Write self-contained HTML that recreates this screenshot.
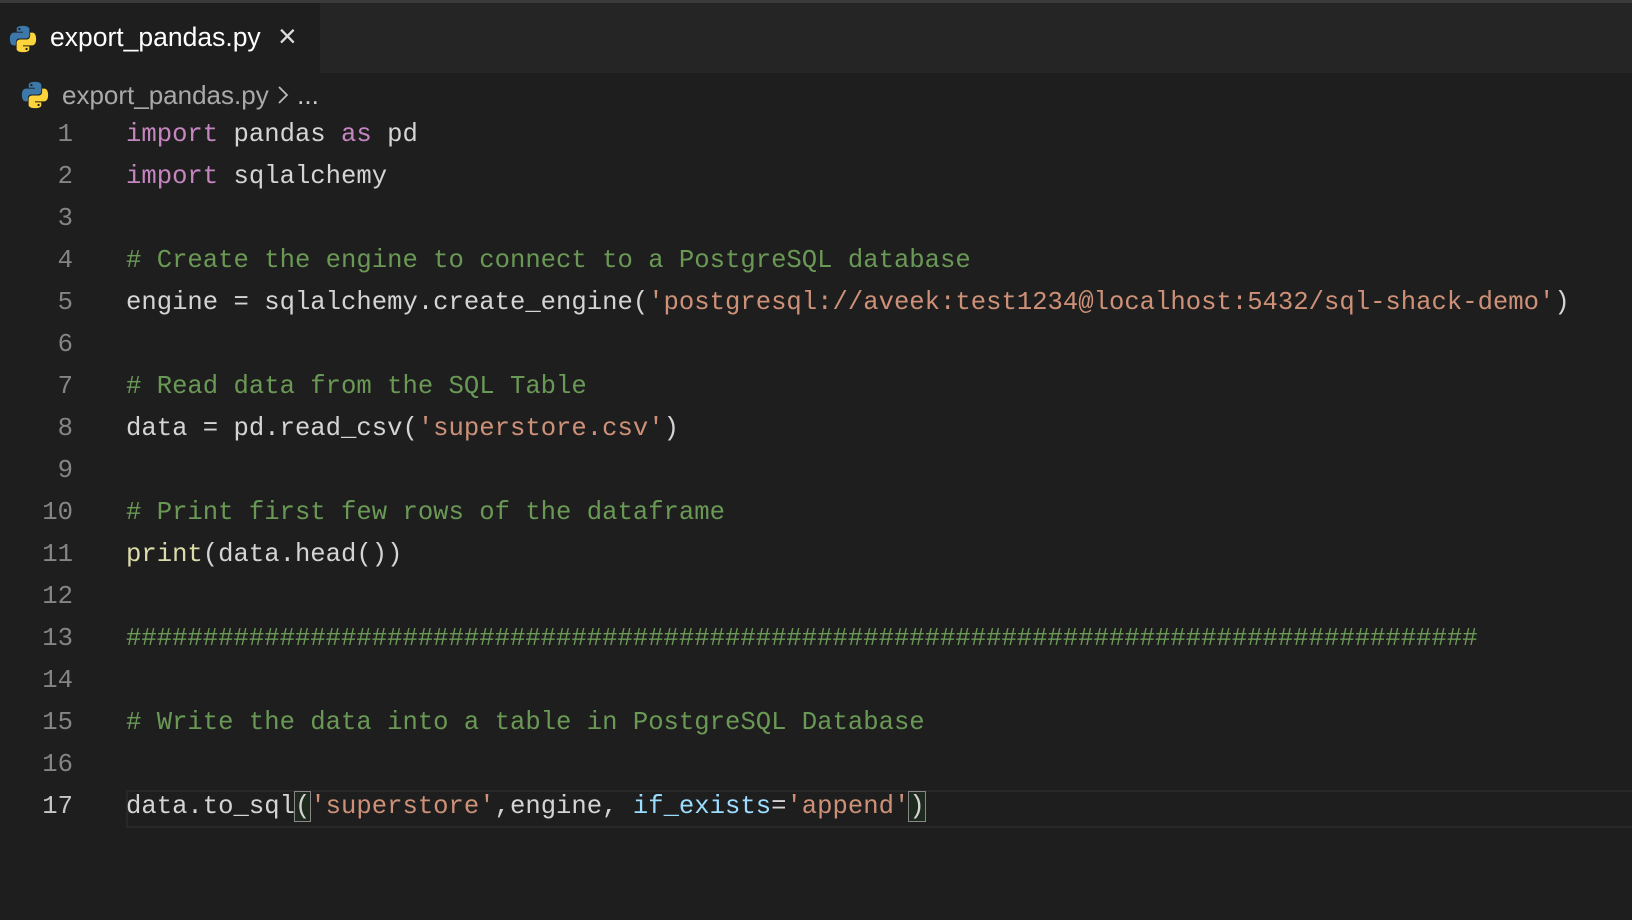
<!DOCTYPE html>
<html><head><style>
body{margin:0;width:1632px;height:920px;background:#1e1e1e;overflow:hidden;position:relative;font-family:"Liberation Sans",sans-serif}
.top{position:absolute;left:0;top:0;width:1632px;height:3px;background:#3a3a3a}
.tabbar{position:absolute;left:0;top:3px;width:1632px;height:70px;background:#252526}
.tab{position:absolute;left:0;top:0;width:320px;height:70px;background:#1e1e1e}
.tab .t{position:absolute;left:50px;top:19px;font-size:26.5px;color:#fff}
.tab .x{position:absolute;left:278px;top:15px;font-size:32px;color:#ddd}
.bc{position:absolute;left:62px;top:80px;font-size:26px;color:#a9a9a9}
.ic{position:absolute}
.code{position:absolute;left:0;top:114px;font-family:"Liberation Mono",monospace;font-size:25.6px;color:#d4d4d4}
.l{height:42px;line-height:42px;position:relative;white-space:pre}
.n{position:absolute;left:0;width:73px;text-align:right;color:#858585}
.c{position:absolute;left:126px}
.k{color:#c586c0}.s{color:#ce9178}.cm{color:#6a9955}.f{color:#dcdcaa}.p{color:#9cdcfe}
.hl{position:absolute;left:126px;top:790px;width:1506px;height:38px;border:2px solid #282828;border-right:none;box-sizing:border-box}
.br{outline:1px solid #888;background:#1e2a1e}
</style></head><body>
<div class="top"></div>
<div class="tabbar"><div class="tab">
<svg class="ic" style="left:8px;top:21px" width="30" height="30" viewBox="0 0 32 32"><path d="M15.9 2c-7 0-6.6 3-6.6 3v3.2h6.7v1H6.6S2 8.7 2 15.9s4 6.9 4 6.9h2.4v-3.3s-.1-4 3.9-4h6.7s3.8.1 3.8-3.6V5.8S23.4 2 15.9 2zm-3.7 2.1a1.2 1.2 0 110 2.4 1.2 1.2 0 010-2.4z" fill="#3c78aa"/><path d="M16.1 30c7 0 6.6-3 6.6-3v-3.2H16v-1h9.4s4.6.5 4.6-6.7-4-6.9-4-6.9h-2.4v3.3s.1 4-3.9 4h-6.7s-3.8-.1-3.8 3.6v6.1S8.6 30 16.1 30zm3.7-2.1a1.2 1.2 0 110-2.4 1.2 1.2 0 010 2.4z" fill="#fdd43b"/></svg>
<div class="t">export_pandas.py</div><div class="x">×</div></div></div>
<svg class="ic" style="left:20px;top:80px" width="30" height="30" viewBox="0 0 32 32"><path d="M15.9 2c-7 0-6.6 3-6.6 3v3.2h6.7v1H6.6S2 8.7 2 15.9s4 6.9 4 6.9h2.4v-3.3s-.1-4 3.9-4h6.7s3.8.1 3.8-3.6V5.8S23.4 2 15.9 2zm-3.7 2.1a1.2 1.2 0 110 2.4 1.2 1.2 0 010-2.4z" fill="#3c78aa"/><path d="M16.1 30c7 0 6.6-3 6.6-3v-3.2H16v-1h9.4s4.6.5 4.6-6.7-4-6.9-4-6.9h-2.4v3.3s.1 4-3.9 4h-6.7s-3.8-.1-3.8 3.6v6.1S8.6 30 16.1 30zm3.7-2.1a1.2 1.2 0 110-2.4 1.2 1.2 0 010 2.4z" fill="#fdd43b"/></svg>
<div class="bc">export_pandas.py <svg width="14" height="22" viewBox="0 0 14 22" style="vertical-align:-2px"><path d="M3 3l8 8-8 8" stroke="#bbb" stroke-width="1.8" fill="none"/></svg> <span style="color:#ccc">...</span></div>
<div class="hl"></div>
<div class="code">
<div class="l"><span class="n">1</span><span class="c"><span class="k">import</span> pandas <span class="k">as</span> pd</span></div>
<div class="l"><span class="n">2</span><span class="c"><span class="k">import</span> sqlalchemy</span></div>
<div class="l"><span class="n">3</span></div>
<div class="l"><span class="n">4</span><span class="c cm"># Create the engine to connect to a PostgreSQL database</span></div>
<div class="l"><span class="n">5</span><span class="c">engine = sqlalchemy.create_engine(<span class="s">'postgresql://aveek:test1234@localhost:5432/sql-shack-demo'</span>)</span></div>
<div class="l"><span class="n">6</span></div>
<div class="l"><span class="n">7</span><span class="c cm"># Read data from the SQL Table</span></div>
<div class="l"><span class="n">8</span><span class="c">data = pd.read_csv(<span class="s">'superstore.csv'</span>)</span></div>
<div class="l"><span class="n">9</span></div>
<div class="l"><span class="n">10</span><span class="c cm"># Print first few rows of the dataframe</span></div>
<div class="l"><span class="n">11</span><span class="c"><span class="f">print</span>(data.head())</span></div>
<div class="l"><span class="n">12</span></div>
<div class="l"><span class="n">13</span><span class="c cm">########################################################################################</span></div>
<div class="l"><span class="n">14</span></div>
<div class="l"><span class="n">15</span><span class="c cm"># Write the data into a table in PostgreSQL Database</span></div>
<div class="l"><span class="n">16</span></div>
<div class="l"><span class="n" style="color:#c6c6c6">17</span><span class="c">data.to_sql<span class="br">(</span><span class="s">'superstore'</span>,engine, <span class="p">if_exists</span>=<span class="s">'append'</span><span class="br">)</span></span></div>
</div>
</body></html>
